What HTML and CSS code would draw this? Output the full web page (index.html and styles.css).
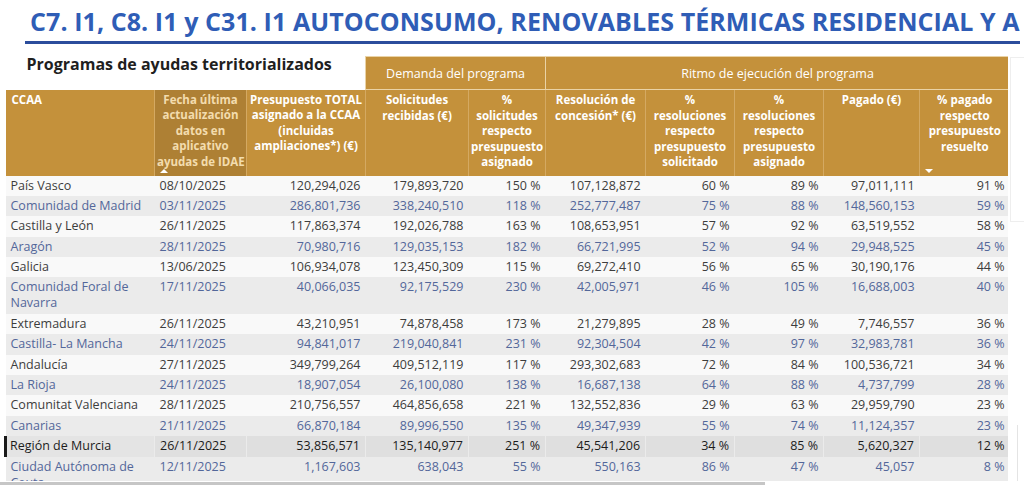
FILE: index.html
```html
<!DOCTYPE html>
<html lang="es">
<head>
<meta charset="utf-8">
<title>Programas de ayudas territorializados</title>
<link rel="stylesheet" href="styles.css">
</head>
<body>
<h1 class="page-title">C7. I1, C8. I1 y C31. I1 AUTOCONSUMO, RENOVABLES TÉRMICAS RESIDENCIAL Y A</h1>
<div class="visual">
  <div class="visual-body">
    <div class="table-wrap">
      <table class="grid">
        <colgroup>
          <col class="w-ccaa"><col class="w-fecha"><col class="w-presu"><col class="w-soli"><col class="w-psoli">
          <col class="w-reso"><col class="w-pres1"><col class="w-pres2"><col class="w-pag"><col class="w-ppag">
        </colgroup>
        <thead>
          <tr class="group-row">
            <th colspan="3" class="subtitle">Programas de ayudas territorializados</th>
            <th colspan="2" class="group">Demanda del programa</th>
            <th colspan="5" class="group">Ritmo de ejecución del programa</th>
          </tr>
          <tr class="col-row">
            <th class="col ccaa">CCAA</th>
            <th class="col fecha">Fecha última<br>actualización<br>datos en<br>aplicativo<br>ayudas de IDAE<span class="sort-up"></span></th>
            <th class="col">Presupuesto TOTAL<br>asignado a la CCAA<br>(incluidas<br>ampliaciones*) (€)</th>
            <th class="col">Solicitudes<br>recibidas (€)</th>
            <th class="col">%<br>solicitudes<br>respecto<br>presupuesto<br>asignado</th>
            <th class="col">Resolución de<br>concesión* (€)</th>
            <th class="col">%<br>resoluciones<br>respecto<br>presupuesto<br>solicitado</th>
            <th class="col">%<br>resoluciones<br>respecto<br>presupuesto<br>asignado</th>
            <th class="col">Pagado (€)</th>
            <th class="col">% pagado<br>respecto<br>presupuesto<br>resuelto<span class="sort-down"></span></th>
          </tr>
        </thead>
        <tbody>
          <tr><td class="name">País Vasco</td><td class="date">08/10/2025</td><td>120,294,026</td><td>179,893,720</td><td>150 %</td><td>107,128,872</td><td>60 %</td><td>89 %</td><td>97,011,111</td><td>91 %</td></tr>
          <tr><td class="name">Comunidad de Madrid</td><td class="date">03/11/2025</td><td>286,801,736</td><td>338,240,510</td><td>118 %</td><td>252,777,487</td><td>75 %</td><td>88 %</td><td>148,560,153</td><td>59 %</td></tr>
          <tr><td class="name">Castilla y León</td><td class="date">26/11/2025</td><td>117,863,374</td><td>192,026,788</td><td>163 %</td><td>108,653,951</td><td>57 %</td><td>92 %</td><td>63,519,552</td><td>58 %</td></tr>
          <tr><td class="name">Aragón</td><td class="date">28/11/2025</td><td>70,980,716</td><td>129,035,153</td><td>182 %</td><td>66,721,995</td><td>52 %</td><td>94 %</td><td>29,948,525</td><td>45 %</td></tr>
          <tr><td class="name">Galicia</td><td class="date">13/06/2025</td><td>106,934,078</td><td>123,450,309</td><td>115 %</td><td>69,272,410</td><td>56 %</td><td>65 %</td><td>30,190,176</td><td>44 %</td></tr>
          <tr><td class="name">Comunidad Foral de Navarra</td><td class="date">17/11/2025</td><td>40,066,035</td><td>92,175,529</td><td>230 %</td><td>42,005,971</td><td>46 %</td><td>105 %</td><td>16,688,003</td><td>40 %</td></tr>
          <tr><td class="name">Extremadura</td><td class="date">26/11/2025</td><td>43,210,951</td><td>74,878,458</td><td>173 %</td><td>21,279,895</td><td>28 %</td><td>49 %</td><td>7,746,557</td><td>36 %</td></tr>
          <tr><td class="name">Castilla- La Mancha</td><td class="date">24/11/2025</td><td>94,841,017</td><td>219,040,841</td><td>231 %</td><td>92,304,504</td><td>42 %</td><td>97 %</td><td>32,983,781</td><td>36 %</td></tr>
          <tr><td class="name">Andalucía</td><td class="date">27/11/2025</td><td>349,799,264</td><td>409,512,119</td><td>117 %</td><td>293,302,683</td><td>72 %</td><td>84 %</td><td>100,536,721</td><td>34 %</td></tr>
          <tr><td class="name">La Rioja</td><td class="date">24/11/2025</td><td>18,907,054</td><td>26,100,080</td><td>138 %</td><td>16,687,138</td><td>64 %</td><td>88 %</td><td>4,737,799</td><td>28 %</td></tr>
          <tr><td class="name">Comunitat Valenciana</td><td class="date">28/11/2025</td><td>210,756,557</td><td>464,856,658</td><td>221 %</td><td>132,552,836</td><td>29 %</td><td>63 %</td><td>29,959,790</td><td>23 %</td></tr>
          <tr><td class="name">Canarias</td><td class="date">21/11/2025</td><td>66,870,184</td><td>89,996,550</td><td>135 %</td><td>49,347,939</td><td>55 %</td><td>74 %</td><td>11,124,357</td><td>23 %</td></tr>
          <tr class="selected"><td class="name">Región de Murcia</td><td class="date">26/11/2025</td><td>53,856,571</td><td>135,140,977</td><td>251 %</td><td>45,541,206</td><td>34 %</td><td>85 %</td><td>5,620,327</td><td>12 %</td></tr>
          <tr><td class="name">Ciudad Autónoma de Ceuta</td><td class="date">12/11/2025</td><td>1,167,603</td><td>638,043</td><td>55 %</td><td>550,163</td><td>86 %</td><td>47 %</td><td>45,057</td><td>8 %</td></tr>
        </tbody>
      </table>
    </div>
    <div class="vscroll">
      <div class="vthumb"></div>
      <div class="vline"></div>
    </div>
  </div>
  <div class="hscroll"><div class="hthumb"></div></div>
</div>
</body>
</html>
```

FILE: styles.css
```css
* { box-sizing: border-box; }

html, body {
  margin: 0;
  padding: 0;
  background: #ffffff;
}

body {
  width: 1024px;
  height: 499px;
  overflow: hidden;
  font-family: "Open Sans", "Noto Sans", sans-serif;
}

.page-title {
  margin: 0 4px 0 25px;
  padding: 6px 0 5px 5px;
  border-bottom: 3px solid #2b4d9c;
  font-size: 25px;
  line-height: 30px;
  letter-spacing: 0.08px;
  font-weight: 700;
  color: #2f5db6;
  white-space: nowrap;
  overflow: hidden;
}

.visual {
  margin-top: 12px;
}

.visual-body {
  display: flex;
  height: 425px;
}

.table-wrap {
  margin-left: 4px;
  width: 1004px;
  height: 425px;
  overflow: hidden;
}

.vscroll {
  flex: 1;
  display: flex;
  flex-direction: column;
  padding: 1px 0 0 2px;
}

.vthumb {
  height: 165px;
  border: 1px solid #eeeeee;
  border-right: 0;
}

.vline {
  margin-top: 203px;
  margin-left: 7px;
  width: 1px;
  height: 56px;
  background: #e4e4e4;
}

.hscroll {
  height: 4px;
  margin-top: 1px;
}

.hthumb {
  width: 765px;
  height: 3px;
  background: #c6c6c6;
}

/* table */
.grid {
  border-collapse: collapse;
  table-layout: fixed;
  width: 1004px;
}

.w-ccaa { width: 149px; }
.w-fecha { width: 92px; }
.w-presu { width: 119px; }
.w-soli { width: 103px; }
.w-psoli { width: 77px; }
.w-reso { width: 100px; }
.w-pres1 { width: 89px; }
.w-pres2 { width: 89px; }
.w-pag { width: 96px; }
.w-ppag { width: 90px; }

.group-row { height: 33px; }

.subtitle {
  text-align: left;
  vertical-align: top;
  padding: 0 0 0 21px;
  font-size: 16px;
  line-height: 14px;
  font-weight: 700;
  color: #1f1f1f;
  white-space: nowrap;
  background: #ffffff;
}

.group {
  background: #c4913b;
  color: #ffffff;
  font-weight: 400;
  font-size: 12.5px;
  text-align: center;
  vertical-align: middle;
  border: 1px solid #ead3a6;
  padding: 0 4px;
}

.col-row { height: 86px; }

.col {
  position: relative;
  background: #c4913b;
  color: #ffffff;
  font-weight: 700;
  font-size: 11.5px;
  line-height: 15.5px;
  font-stretch: 88%;
  padding: 2px 2px;
  vertical-align: top;
  text-align: center;
  white-space: nowrap;
  border-left: 1px solid #d4a962;
}

.col.ccaa {
  text-align: left;
  padding-left: 6px;
  border-left: 0;
}

.col.fecha {
  background: #ae8034;
  color: #f3dcae;
}

.sort-up,
.sort-down {
  position: absolute;
  left: 5px;
  bottom: 3px;
  width: 0;
  height: 0;
  border-left: 4px solid transparent;
  border-right: 4px solid transparent;
}

.sort-up { border-bottom: 4px solid #ffffff; }
.sort-down { border-top: 4px solid #ffffff; }

td {
  padding: 2px 5px 2.4px;
  font-size: 12.5px;
  line-height: 16px;
  text-align: right;
  white-space: nowrap;
  vertical-align: top;
  color: #3d3d3d;
  background: #f9f9f9;
}

tbody tr:nth-child(even) td {
  background: #ebebeb;
  color: #53679a;
}

td.name {
  text-align: left;
  white-space: normal;
}

td.date { text-align: left; }

tbody tr.selected td {
  background: #dfdfdf;
  color: #1c1c1c;
  border-left: 1px solid #ebebeb;
}

tbody tr.selected td.name {
  border-left: 3px solid #1a1a1a;
  padding-left: 3px;
  background: #e4e4e4;
}
```
